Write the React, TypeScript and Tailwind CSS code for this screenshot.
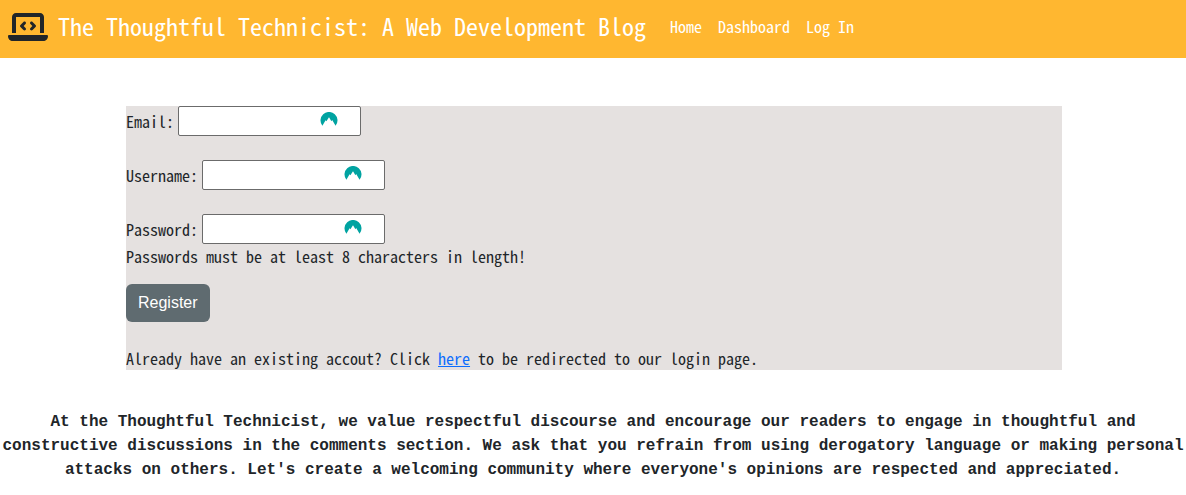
import { FaLaptopCode } from "react-icons/fa6";

const navLinks = ["Home", "Dashboard", "Log In"];

function VaultIcon() {
  return (
    <svg viewBox="0 0 18 14" className="h-3.5 w-[18px]" aria-hidden="true">
      <path
        fill="#00a3a1"
        d="M2.4 13.8A8.5 8.5 0 1 1 15.6 13.8L12.2 8L11.4 9.2L9 5.2L6.4 9.2L5.6 8.2Z"
      />
    </svg>
  );
}

function Field({ id, label, type }: { id: string; label: string; type: string }) {
  return (
    <div className="flex items-center gap-1">
      <label htmlFor={id}>{label}</label>
      <div className="relative">
        <input
          id={id}
          type={type}
          className="block h-[30px] w-[183px] rounded-xs border border-[#6b6b6b] bg-white pr-11 pl-1"
        />
        <span className="pointer-events-none absolute top-1.5 right-[23px]">
          <VaultIcon />
        </span>
      </div>
    </div>
  );
}

export default function App() {
  return (
    <div className="font-['Noto_Sans_Mono_CJK_SC','Noto_Sans_Mono_CJK_JP','DejaVu_Sans_Mono',monospace] text-base leading-6 text-[#212529]">
      <nav className="flex h-[58px] items-center bg-[#ffb730] px-2 pb-1 text-white">
        <FaLaptopCode className="h-8 w-10 shrink-0 text-[#212529]" aria-hidden="true" />
        <a href="#" className="ml-2.5 pb-0.5 text-2xl leading-9">
          The Thoughtful Technicist: A Web Development Blog
        </a>
        <ul className="ml-6 flex gap-4 pb-0.5">
          {navLinks.map((name) => (
            <li key={name}>
              <a href="#">{name}</a>
            </li>
          ))}
        </ul>
      </nav>

      <main className="pt-12 pl-0.5">
        <form className="mx-auto max-w-[936px] bg-[#e5e1e0]">
          <div className="flex flex-col gap-6">
            <Field id="email" label="Email:" type="email" />
            <Field id="username" label="Username:" type="text" />
            <Field id="password" label="Password:" type="password" />
          </div>
          <p>Passwords must be at least 8 characters in length!</p>
          <button
            type="button"
            className="mt-4 block rounded-md bg-[#5f6b70] px-3 py-[7px] font-['Liberation_Sans',sans-serif] text-white"
          >
            Register
          </button>
          <p className="mt-6">
            Already have an existing accout? Click{" "}
            <a href="#" className="text-[#0d6efd] underline">
              here
            </a>{" "}
            to be redirected to our login page.
          </p>
        </form>
      </main>

      <footer className="mt-10 text-center font-['Liberation_Mono',monospace] font-bold">
        At the Thoughtful Technicist, we value respectful discourse and encourage our readers to
        engage in thoughtful and constructive discussions in the comments section. We ask that you
        refrain from using derogatory language or making personal attacks on others. Let's create a
        welcoming community where everyone's opinions are respected and appreciated.
      </footer>
    </div>
  );
}
